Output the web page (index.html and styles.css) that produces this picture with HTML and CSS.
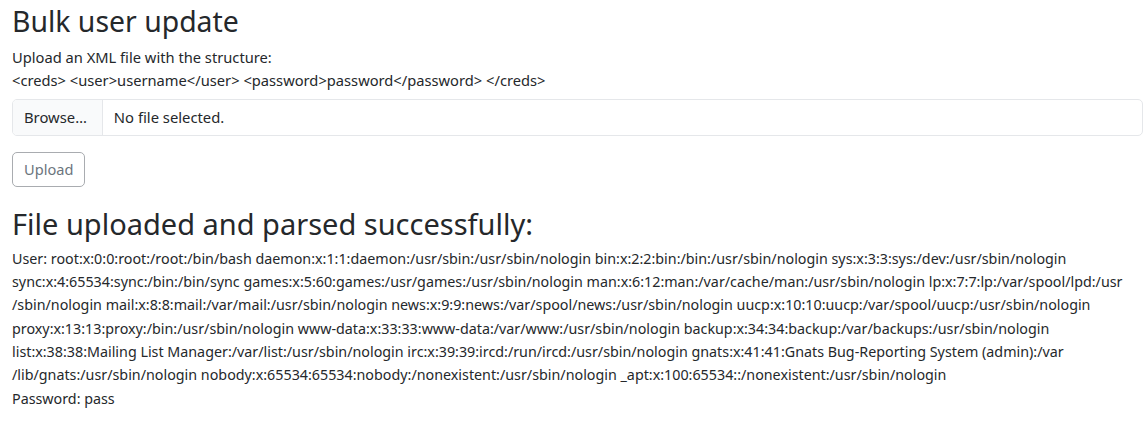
FILE: index.html
```html
<!DOCTYPE html>
<html lang="en">
<head>
<meta charset="utf-8">
<title>Bulk user update</title>
<link rel="stylesheet" href="styles.css">
</head>
<body>
<main class="page">
  <h1 class="title">Bulk user update</h1>
  <p class="intro">Upload an XML file with the structure:<br>&lt;creds&gt; &lt;user&gt;username&lt;/user&gt; &lt;password&gt;password&lt;/password&gt; &lt;/creds&gt;</p>
  <form class="upload-form">
    <div class="file-input">
      <span class="file-browse">Browse…</span>
      <span class="file-name">No file selected.</span>
    </div>
    <button type="button" class="btn-upload">Upload</button>
  </form>
  <h2 class="result-title">File uploaded and parsed successfully:</h2>
  <p class="result">User: root:x:0:0:root:/root:/bin/bash daemon:x:1:1:daemon:/usr/sbin:/usr/sbin/nologin bin:x:2:2:bin:/bin:/usr/sbin/nologin sys:x:3:3:sys:/dev:/usr/sbin/nologin<br>sync:x:4:65534:sync:/bin:/bin/sync games:x:5:60:games:/usr/games:/usr/sbin/nologin man:x:6:12:man:/var/cache/man:/usr/sbin/nologin lp:x:7:7:lp:/var/spool/lpd:/usr<br>/sbin/nologin mail:x:8:8:mail:/var/mail:/usr/sbin/nologin news:x:9:9:news:/var/spool/news:/usr/sbin/nologin uucp:x:10:10:uucp:/var/spool/uucp:/usr/sbin/nologin<br>proxy:x:13:13:proxy:/bin:/usr/sbin/nologin www-data:x:33:33:www-data:/var/www:/usr/sbin/nologin backup:x:34:34:backup:/var/backups:/usr/sbin/nologin<br>list:x:38:38:Mailing List Manager:/var/list:/usr/sbin/nologin irc:x:39:39:ircd:/run/ircd:/usr/sbin/nologin gnats:x:41:41:Gnats Bug-Reporting System (admin):/var<br>/lib/gnats:/usr/sbin/nologin nobody:x:65534:65534:nobody:/nonexistent:/usr/sbin/nologin _apt:x:100:65534::/nonexistent:/usr/sbin/nologin<br>Password: pass</p>
</main>
</body>
</html>
```
FILE: styles.css
```css
html, body {
  margin: 0;
  padding: 0;
  background: #ffffff;
}
body {
  font-family: "Noto Sans", "Open Sans", sans-serif;
  font-size: 14.3px;
  color: #25282b;
}
.page {
  padding: 3px 3px 0 12px;
}
.title {
  font-size: 28.4px;
  font-weight: 400;
  line-height: 36px;
  margin: 0 0 7px 0;
}
.intro {
  margin: 0 0 6px 0;
  line-height: 23.3px;
  font-size: 14.7px;
}
.upload-form {
  display: flex;
  flex-direction: column;
  align-items: flex-start;
  gap: 16px;
}
.file-input {
  align-self: stretch;
  display: flex;
  height: 37px;
  box-sizing: border-box;
  border: 1px solid #e5e7ea;
  border-radius: 5px;
  overflow: hidden;
  font-size: 14.8px;
}
.file-browse {
  display: flex;
  align-items: center;
  padding: 0 15px 0 11px;
  background: #f9fafb;
  border-right: 1px solid #e5e7ea;
}
.file-name {
  display: flex;
  align-items: center;
  padding: 0 11px;
}
.btn-upload {
  font-family: inherit;
  font-size: 14.6px;
  color: #6c757d;
  background: #fff;
  border: 1px solid #a9acb0;
  border-radius: 5px;
  height: 35px;
  padding: 0 11px;
}
.result-title {
  font-size: 29px;
  font-weight: 400;
  line-height: 40px;
  margin: 17px 0 0 0;
}
.result {
  margin: 3px 0 0 0;
  line-height: 23.35px;
  white-space: nowrap;
}
```
